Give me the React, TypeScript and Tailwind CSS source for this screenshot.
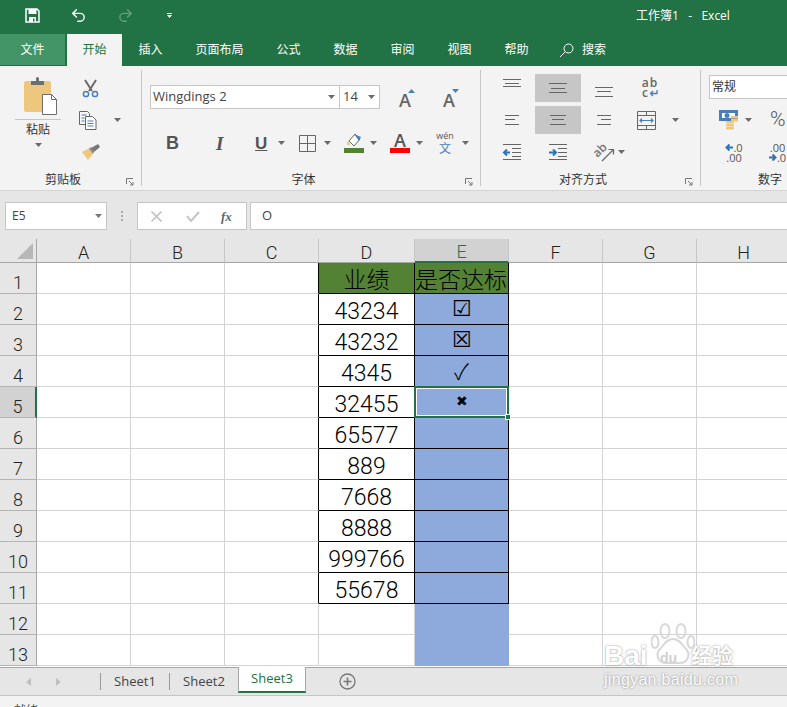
import { Redo2, Undo2 } from "lucide-react";
import type { ReactNode } from "react";

const ui = "font-['Open_Sans','Noto_Sans_CJK_SC',sans-serif]";
const cellFont = "font-['Roboto','Noto_Sans_CJK_SC',sans-serif] font-light";

const columns = ["A", "B", "C", "D", "E", "F", "G", "H"];
const scores = ["业绩", "43234", "43232", "4345", "32455", "65577", "889", "7668", "8888", "999766", "55678", "", ""];
const marks = ["是否达标", "☑", "☒", "✓", "✖", "", "", "", "", "", "", "", ""];
const tabs = ["插入", "页面布局", "公式", "数据", "审阅", "视图", "帮助"];

function Caret({ color = "#6a6a6a" }: { color?: string }) {
  return (
    <svg width="7" height="4" viewBox="0 0 7 4" className="shrink-0">
      <path d="M0 0h7L3.5 4z" fill={color} />
    </svg>
  );
}

function Launcher() {
  return (
    <svg width="8" height="8" viewBox="0 0 8 8" className="shrink-0 mt-[3px]">
      <path d="M.5 6V.5H7M3 3l4 4M7 4v3H4" fill="none" stroke="#777" />
    </svg>
  );
}

function Group({ width, label, children }: { width: string; label: string; children: ReactNode }) {
  return (
    <section className={`${width} shrink-0 my-1 flex flex-col border-r border-[#c6c6c6]`}>
      <div className="flex-1 min-h-0">{children}</div>
      <div className="h-[20px] -mb-[4px] flex items-center pr-[7px]">
        <span className="flex-1 text-center text-[12px] text-[#333]">{label}</span>
        <Launcher />
      </div>
    </section>
  );
}

// three grey bars, y given against the 28px tall button
function Bars({ bars, active }: { bars: [number, number, number][]; active?: boolean }) {
  return (
    <div className={`h-[28px] ${active ? "bg-[#c6c6c6]" : ""}`}>
      <svg width="46" height="28" viewBox="0 0 46 28">
        {bars.map(([x, y, w], i) => (
          <rect key={i} x={x} y={y} width={w} height="1" fill="#666" />
        ))}
      </svg>
    </div>
  );
}

function PasteIcon() {
  return (
    <svg width="36" height="39" viewBox="0 0 36 39">
      <rect x="1" y="4" width="27" height="31" rx="2" fill="#edc77e" />
      <path d="M8 8V4h5V1.500a1.500 1.500 0 0 1 3 0V4h5v4z" fill="#6e6e6e" />
      <path d="M19.500 17.500h9l5 5v15h-14z" fill="#fff" stroke="#6e6e6e" />
      <path d="M28.500 17.500v5h5" fill="none" stroke="#6e6e6e" />
    </svg>
  );
}

function ScissorsIcon() {
  return (
    <svg width="17" height="19" viewBox="0 0 17 19">
      <path d="M3 1l7 11M14 1L7 12" stroke="#6a6a6a" strokeWidth="2" fill="none" />
      <circle cx="4" cy="15" r="2.600" fill="none" stroke="#4a7ebb" strokeWidth="1.500" />
      <circle cx="13" cy="15" r="2.600" fill="none" stroke="#4a7ebb" strokeWidth="1.500" />
    </svg>
  );
}

function CopyIcon() {
  return (
    <svg width="18" height="19" viewBox="0 0 18 19">
      <path d="M.5.500h8l2 2v11H.5z" fill="#f7f7f7" stroke="#666" />
      <path d="M6.500 5.500h7l3.500 3.500v9.500H6.500z" fill="#fff" stroke="#666" />
      <path d="M2.500 4h5M2.500 7h3M2.500 10h3M8.500 10h6M8.500 12.500h6M8.500 15h6" stroke="#4a7ebb" />
    </svg>
  );
}

function BrushIcon() {
  return (
    <svg width="18" height="16" viewBox="0 0 18 16">
      <path d="M0 8l8-4 3 6-5 6z" fill="#edc77e" />
      <path d="M7 4.500l2-1.500 3 5-1 2z" fill="#8a8a8a" />
      <path d="M9 4l7-4 2 3-6 5z" fill="#777" />
    </svg>
  );
}

function GrowA({ up }: { up: boolean }) {
  return (
    <div className="w-[44px] h-[24px] flex justify-center items-center pt-[6px]">
      <div className="relative text-[18px] leading-[16px] text-[#666] font-semibold">
        A
        <svg width="7" height="4" viewBox="0 0 7 4" className="absolute -right-[4px] -top-[3px]">
          <path d={up ? "M0 4h7L3.500 0z" : "M0 0h7L3.500 4z"} fill="#4a7ebb" />
        </svg>
      </div>
    </div>
  );
}

function BorderIcon() {
  return (
    <svg width="17" height="17" viewBox="0 0 17 17">
      <path d="M.5.500h16v16H.5zM8.500.500v16M.5 8.500h16" fill="none" stroke="#666" />
    </svg>
  );
}

function FillIcon() {
  return (
    <div className="flex flex-col items-center">
      <svg width="20" height="15" viewBox="0 0 20 15">
        <path d="M5 8l6-7 5 5-6 7z" fill="#fff" stroke="#666" />
        <path d="M10 1l7 3-2 4z" fill="#4a7ebb" />
        <path d="M3 9l2-1 1 4H3z" fill="#edc77e" />
      </svg>
      <div className="w-[20px] h-[5px] bg-[#548235]" />
    </div>
  );
}

function WrapIcon() {
  return (
    <div className="w-[46px] h-[28px] flex flex-col items-center pt-[4px] text-[12px] leading-[10px] font-semibold text-[#666]">
      <span className="tracking-[1px] h-[10px]">ab</span>
      <span className="flex items-center h-[10px]">
        c
        <svg width="9" height="7" viewBox="0 0 9 7" className="ml-[1px]">
          <path d="M8 0v3.500H2M4 1L1.500 3.500 4 6" fill="none" stroke="#4a7ebb" strokeWidth="1.300" />
        </svg>
      </span>
    </div>
  );
}

function MergeIcon() {
  return (
    <svg width="19" height="19" viewBox="0 0 19 19">
      <path d="M.5.500h18v18H.5zM.5 4.500h18M.5 14.500h18M9.500.500v4M9.500 14.500v4" fill="none" stroke="#666" />
      <path d="M3 9.500h13M5 7.500l-2 2 2 2M14 7.500l2 2-2 2" fill="none" stroke="#4a7ebb" strokeWidth="1.200" />
    </svg>
  );
}

function IndentIcon({ flip }: { flip?: boolean }) {
  return (
    <svg width="46" height="28" viewBox="0 0 46 28">
      <g fill="#666">
        <rect x="14" y="6" width="18" height="1" />
        <rect x="23" y="10" width="9" height="1" />
        <rect x="23" y="14" width="9" height="1" />
        <rect x="23" y="18" width="9" height="1" />
        <rect x="14" y="21" width="18" height="1" />
      </g>
      <path
        d={flip ? "M14 14.500h6M18 11.500l3 3-3 3" : "M21 14.500h-6M18 11.500l-3 3 3 3"}
        fill="none"
        stroke="#2e75b6"
        strokeWidth="2"
      />
    </svg>
  );
}

function OrientIcon() {
  return (
    <div className="w-[46px] h-[28px] flex items-center pl-[12px] gap-[3px]">
      <svg width="22" height="20" viewBox="0 0 22 20" className="overflow-visible">
        <text x="0" y="13" fontSize="12" fontWeight="600" fill="#777" transform="rotate(-45 6 9)" fontFamily="Open Sans">ab</text>
        <path d="M9 19L20 8M15.500 7.500h5v5" fill="none" stroke="#666" strokeWidth="1.200" />
      </svg>
      <Caret />
    </div>
  );
}

function MoneyIcon() {
  return (
    <svg width="20" height="20" viewBox="0 0 20 20">
      <rect x="0" y="0" width="19" height="11" fill="#4a7ebb" />
      <rect x="3" y="3" width="13" height="5" fill="#fff" />
      <circle cx="8" cy="5.500" r="2.500" fill="#4a7ebb" />
      <rect x="12" y="6" width="7" height="2.500" fill="#edc77e" />
      <rect x="12" y="9" width="7" height="2.500" fill="#edc77e" />
      <rect x="7" y="11" width="8" height="2.500" rx="1" fill="#edc77e" />
      <rect x="7" y="14" width="8" height="2.500" rx="1" fill="#edc77e" />
      <rect x="7" y="17" width="8" height="2.500" rx="1" fill="#edc77e" />
    </svg>
  );
}

function DecArrow({ right }: { right?: boolean }) {
  return (
    <svg width="8" height="7" viewBox="0 0 8 7" className="shrink-0">
      <path d={right ? "M0 3.500h6M3.500 .5l3 3-3 3" : "M8 3.500H2M4.500 .5l-3 3 3 3"} fill="none" stroke="#2e75b6" strokeWidth="2" />
    </svg>
  );
}

function DecimalIcon({ more }: { more?: boolean }) {
  return (
    <div className="w-[32px] flex flex-col items-center gap-[1px] text-[11px] leading-[9px] text-[#555]">
      <span className="h-[9px] flex items-center">
        {more ? null : <DecArrow />}
        {more ? ".00" : ".0"}
      </span>
      <span className="h-[9px] flex items-center">
        {more ? <DecArrow right /> : null}
        {more ? ".0" : ".00"}
      </span>
    </div>
  );
}

function Ribbon() {
  return (
    <div className="h-[124px] bg-[#f3f3f3] flex overflow-hidden text-[#444]">
      <Group width="w-[142px]" label="剪贴板">
        <div className="flex h-full">
          <div className="w-[76px] pl-[15px] pt-[7px]">
            <div className="w-[46px] flex justify-center pl-[5px] pb-[3px] border-b border-[#c6c6c6]">
              <PasteIcon />
            </div>
            <div className="w-[46px] flex flex-col items-center">
              <span className="text-[12px] leading-[18px] mt-[1px] text-[#333]">粘贴</span>
              <div className="mt-[4px]"><Caret /></div>
            </div>
          </div>
          <div className="flex flex-col pt-[9px] w-[50px]">
            <div className="pl-[6px] h-[32px]"><ScissorsIcon /></div>
            <div className="pl-[3px] h-[33px] flex items-start gap-[17px]">
              <CopyIcon />
              <div className="pt-[7px]"><Caret /></div>
            </div>
            <div className="pl-[6px]"><BrushIcon /></div>
          </div>
        </div>
      </Group>

      <Group width="w-[339px]" label="字体">
        <div className="pl-[8px] pt-[15px]">
          <div className="flex items-center">
            <div className="w-[190px] h-[24px] bg-white border border-[#c6c6c6] flex items-center justify-between px-[2px] pr-[4px] text-[13px]">
              <span className="text-[#444]">Wingdings 2</span>
              <Caret />
            </div>
            <div className="w-[40px] h-[24px] bg-white border border-l-0 border-[#c6c6c6] flex items-center justify-between pl-[3px] pr-[4px] text-[13px]">
              <span>14</span>
              <Caret />
            </div>
            <div className="pl-[3px]"><GrowA up /></div>
            <GrowA up={false} />
          </div>
          <div className="flex items-center h-[28px] mt-[20px] pl-[13px]">
            <span className="w-[50px] text-[18px] leading-none font-bold text-[#555] font-['Liberation_Sans',sans-serif] pl-[3px]">B</span>
            <span className="w-[37px] text-[19px] leading-none font-bold italic text-[#555] font-['Liberation_Serif',serif] pl-[3px]">I</span>
            <span className="w-[23px] text-[17px] leading-none font-bold underline text-[#555] font-['Liberation_Sans',sans-serif] ml-[5px]">U</span>
            <Caret />
            <div className="ml-[14px]"><BorderIcon /></div>
            <div className="ml-[8px]"><Caret /></div>
            <div className="ml-[13px]"><FillIcon /></div>
            <div className="ml-[6px]"><Caret /></div>
            <div className="ml-[13px] flex flex-col items-center">
              <span className="text-[18px] leading-[15px] font-semibold text-[#555]">A</span>
              <div className="w-[20px] h-[5px] bg-[#ff0000]" />
            </div>
            <div className="ml-[6px]"><Caret /></div>
            <div className="ml-[13px] w-[18px] flex flex-col items-center text-[#555]">
              <span className="text-[9px] leading-[8px] h-[8px]">wén</span>
              <span className="text-[12px] leading-[13px] mt-[2px] text-[#4a7ebb]">文</span>
            </div>
            <div className="ml-[8px]"><Caret /></div>
          </div>
        </div>
      </Group>

      <Group width="w-[220px]" label="对齐方式">
        <div className="pl-[8px] pt-[4px] grid grid-cols-[46px_46px_46px_78px] gap-y-[4px]">
          <Bars bars={[[14, 5, 18], [16, 9, 14], [14, 12, 18]]} />
          <Bars active bars={[[14, 9, 18], [16, 14, 14], [14, 18, 18]]} />
          <Bars bars={[[14, 13, 18], [16, 17, 14], [14, 22, 18]]} />
          <WrapIcon />
          <Bars bars={[[16, 9, 14], [16, 13, 10], [16, 18, 14]]} />
          <Bars active bars={[[15, 9, 16], [17, 13, 12], [15, 18, 16]]} />
          <Bars bars={[[16, 9, 14], [20, 13, 10], [16, 18, 14]]} />
          <div className="h-[28px] flex items-center pl-[10px] gap-[16px]">
            <MergeIcon />
            <Caret />
          </div>
          <IndentIcon />
          <IndentIcon flip />
          <OrientIcon />
        </div>
      </Group>

      <section className="flex-1 my-1 flex flex-col min-w-0">
        <div className="flex-1 pl-[8px] pt-[5px]">
          <div className="h-[24px] bg-white border border-r-0 border-[#c6c6c6] flex items-center pl-[2px] text-[12px] text-[#333]">常规</div>
          <div className="flex items-center mt-[10px] pl-[10px]">
            <MoneyIcon />
            <div className="ml-[6px]"><Caret /></div>
            <span className="ml-[18px] text-[21px] leading-none font-['Roboto',sans-serif] font-light text-[#555]">%</span>
          </div>
          <div className="flex items-center mt-[13px] gap-[18px]">
            <div className="pl-[9px]"><DecimalIcon /></div>
            <DecimalIcon more />
          </div>
        </div>
        <div className="h-[20px] -mb-[4px] flex items-center pl-[57px] text-[12px] text-[#333]">数字</div>
      </section>
    </div>
  );
}

function FormulaBar() {
  return (
    <div className="h-[49px] bg-[#e6e6e6] border-t border-[#d4d4d4] flex items-start pt-[11px] pl-[5px] text-[12px] text-[#444]">
      <div className="w-[102px] h-[28px] bg-white border border-[#c6c6c6] flex items-center justify-between pl-[6px] pr-[4px]">
        <span>E5</span>
        <Caret color="#777" />
      </div>
      <div className="w-[30px] h-[28px] flex flex-col items-center justify-center gap-[2px]">
        <i className="w-[2px] h-[2px] bg-[#aaa]" />
        <i className="w-[2px] h-[2px] bg-[#aaa]" />
        <i className="w-[2px] h-[2px] bg-[#aaa]" />
      </div>
      <div className="w-[110px] h-[28px] bg-white border border-[#c6c6c6] flex items-center pl-[13px]">
        <svg width="11" height="11" viewBox="0 0 11 11"><path d="M.5.500l10 10M10.500.500l-10 10" stroke="#c4c4c4" strokeWidth="1.600" /></svg>
        <svg width="14" height="11" viewBox="0 0 14 11" className="ml-[24px]"><path d="M1 5l4 5 8-9" fill="none" stroke="#c4c4c4" strokeWidth="2" /></svg>
        <span className="ml-[21px] text-[13px] leading-none font-bold italic font-['Liberation_Serif',serif] text-[#666]">fx</span>
      </div>
      <div className="flex-1 h-[28px] ml-[3px] bg-white border border-r-0 border-[#c6c6c6] flex items-center pl-[11px] text-[13px]">O</div>
    </div>
  );
}

function Sheet() {
  return (
    <div className={`${cellFont} grid grid-cols-[37px_94px_94px_94px_96px_94px_94px_94px_94px] grid-rows-[24px_repeat(13,31px)] overflow-hidden`}>
      <div className="bg-[#e6e6e6] border-r border-b border-[#a6a6a6] flex items-end justify-end pr-[3px] pb-[3px]">
        <svg width="16" height="16" viewBox="0 0 16 16"><path d="M16 0v16H0z" fill="#b7b7b7" /></svg>
      </div>
      {columns.map((c) => (
        <div
          key={c}
          className={`flex items-end justify-center text-[18px] leading-[19px] border-r border-[#c6c6c6] ${
            c === "E" ? "bg-[#d2d2d2] border-b-2 border-b-[#217346] text-[#217346]" : "bg-[#e6e6e6] border-b border-b-[#a6a6a6] text-[#222]"
          }`}
        >
          {c}
        </div>
      ))}
      {scores.map((score, i) => {
        const row = i + 1;
        const inTable = row <= 11;
        const edge = row === 5;
        const line = "border-r border-b border-[#d4d4d4]";
        return [
          <div
            key={`h${row}`}
            className={`flex items-end justify-center text-[18px] leading-[21px] text-[#222] border-b border-b-[#b4b4b4] border-r ${
              edge ? "bg-[#d2d2d2] border-r-2 border-r-[#217346]" : "bg-[#e6e6e6] border-r-[#a6a6a6]"
            }`}
          >
            {row}
          </div>,
          <div key={`a${row}`} className={line} />,
          <div key={`b${row}`} className={line} />,
          <div key={`c${row}`} className={`border-b border-b-[#d4d4d4] border-r ${inTable ? "border-r-black" : "border-r-[#d4d4d4]"}`} />,
          <div
            key={`d${row}`}
            className={`flex items-end justify-center text-[23px] leading-[25px] text-black overflow-hidden ${
              inTable ? "border-r border-b border-black" : "border-r border-b border-[#d4d4d4]"
            } ${row === 1 ? "bg-[#548235]" : ""}`}
          >
            {score}
          </div>,
          <div
            key={`e${row}`}
            className={`relative flex justify-center whitespace-nowrap text-black ${
              row === 1
                ? "bg-[#548235] items-end text-[23px] leading-[25px]"
                : row === 4
                  ? "bg-[#8ea9db] items-start text-[22px] leading-[29px] font-['Noto_Sans_CJK_SC','DejaVu_Sans',sans-serif]"
                  : row === 5
                    ? "bg-[#8ea9db] items-start text-[14px] leading-[29px] font-['DejaVu_Sans',sans-serif]"
                    : "bg-[#8ea9db] items-start text-[22px] leading-[30px] font-['DejaVu_Sans',sans-serif]"
            } ${inTable ? "border-r border-b border-black" : ""}`}
          >
            {row === 1 ? <span className="w-[93px] overflow-hidden">{marks[i]}</span> : marks[i]}
            {row === 5 && (
              <div className="absolute z-10 -left-[1px] -top-[1px] -right-[1px] -bottom-[1px] border-2 border-[#217346] shadow-[inset_0_0_0_1px_white]">
                <span className="absolute -right-[4px] -bottom-[4px] w-[6px] h-[6px] bg-[#217346] border border-white" />
              </div>
            )}
          </div>,
          <div key={`f${row}`} className={line} />,
          <div key={`g${row}`} className={line} />,
          <div key={`i${row}`} className={line} />,
        ];
      })}
    </div>
  );
}

function SheetTabs() {
  return (
    <div className="h-[28px] mt-[1px] bg-[#e6e6e6] border-t border-[#a6a6a6] flex items-stretch text-[13px] text-[#444]">
      <div className="w-[100px] flex items-center pl-[26px] gap-[25px] shrink-0">
        <svg width="5" height="8" viewBox="0 0 5 8"><path d="M5 0v8L0 4z" fill="#c0c0c0" /></svg>
        <svg width="5" height="8" viewBox="0 0 5 8"><path d="M0 0v8l5-4z" fill="#c0c0c0" /></svg>
      </div>
      <div className="w-[69px] my-[5px] border-l border-[#999] flex items-center justify-center">Sheet1</div>
      <div className="w-[69px] my-[5px] border-l border-[#999] flex items-center justify-center">Sheet2</div>
      <div className="w-[68px] -mt-px mb-[2px] bg-white border-x border-[#a6a6a6] border-b-2 border-b-[#217346] text-[#217346] flex items-center justify-center">Sheet3</div>
      <div className="pl-[33px] flex items-center">
        <svg width="17" height="17" viewBox="0 0 17 17">
          <circle cx="8.500" cy="8.500" r="7.500" fill="none" stroke="#777" strokeWidth="1.300" />
          <path d="M8.500 4.500v8M4.500 8.500h8" stroke="#777" strokeWidth="1.600" />
        </svg>
      </div>
    </div>
  );
}

function Watermark() {
  return (
    <div className="font-['Liberation_Sans','Noto_Sans_CJK_SC',sans-serif] absolute left-[604px] top-[622px] w-[142px] text-white [text-shadow:0_0_2px_rgba(90,90,90,0.75)] pointer-events-none">
      <svg width="44" height="44" viewBox="0 0 44 44" className="absolute left-[47px] top-0" fill="none" stroke="#d8d8d8" strokeWidth="2">
        <ellipse cx="14" cy="9" rx="4.500" ry="7" />
        <ellipse cx="30" cy="9" rx="4.500" ry="7" />
        <ellipse cx="4" cy="20" rx="3.500" ry="6" />
        <ellipse cx="40" cy="20" rx="3.500" ry="6" />
        <path d="M22 17c7 0 9 6 13 10 5 5 2 14-6 14H15C7 41 4 32 9 27c4-4 6-10 13-10z" />
      </svg>
      <div className="flex items-end h-[46px] pt-[22px] text-[28px] leading-[24px] font-bold">
        <span className="w-[76px]">Bai</span>
        <span className="text-[14px] leading-[20px] w-[20px] -ml-[20px] text-[#d0d0d0] [text-shadow:none]">du</span>
        <span className="text-[21px] leading-[24px] ml-[11px] whitespace-nowrap">经验</span>
      </div>
      <div className="mt-[2px] text-[16px] leading-[20px] whitespace-nowrap tracking-[0.3px]">jingyan.baidu.com</div>
    </div>
  );
}

export default function App() {
  return (
    <div className={`${ui} relative w-[787px] h-[707px] overflow-hidden bg-white flex flex-col`}>
      <header className="h-[34px] pb-[3px] bg-[#217346] flex items-center text-white">
        <div className="pl-[25px] w-[56px]">
          <svg width="15" height="15" viewBox="0 0 15 15">
            <path d="M1 1h11l2 2v11H1z" fill="none" stroke="#fff" strokeWidth="1.500" />
            <rect x="3.500" y="1" width="8" height="5" fill="#fff" />
            <rect x="4" y="9" width="7" height="5" fill="#fff" />
            <rect x="8" y="10.500" width="1.500" height="3" fill="#217346" />
          </svg>
        </div>
        <div className="w-[47px] pl-[14px]"><Undo2 size={17} strokeWidth={2} /></div>
        <div className="w-[45px] pl-[14px] opacity-30"><Redo2 size={17} strokeWidth={2} /></div>
        <div className="pl-[19px] w-[45px] flex flex-col gap-[1px]">
          <i className="w-[5px] h-px bg-white" />
          <svg width="5" height="3" viewBox="0 0 5 3"><path d="M0 0h5L2.500 3z" fill="#fff" /></svg>
        </div>
        <div className="ml-[443px] text-[12px] whitespace-nowrap">工作簿1&nbsp;&nbsp; - &nbsp;&nbsp;Excel</div>
      </header>

      <nav className="h-[32px] bg-[#217346] flex items-stretch text-[12px] text-white">
        <div className="w-[65px] mb-[1px] bg-[#439467] flex items-center justify-center">文件</div>
        <div className="w-[55px] ml-[2px] bg-[#f3f3f3] text-[#217346] flex items-center justify-center">开始</div>
        {tabs.map((t) => (
          <div key={t} className="px-[16.5px] flex items-center">{t}</div>
        ))}
        <div className="flex items-center pl-[14px] gap-[8px]">
          <svg width="15" height="15" viewBox="0 0 15 15" fill="none" stroke="#fff">
            <circle cx="9.500" cy="5.500" r="4.500" />
            <path d="M6 9l-5 5" />
          </svg>
          搜索
        </div>
      </nav>

      <Ribbon />
      <FormulaBar />
      <Sheet />
      <SheetTabs />
      <div className="flex-1 min-h-0 bg-[#f3f3f3] border-t border-[#c6c6c6] pl-[14px] pt-[5px] text-[12px] leading-[20px] text-[#444] overflow-hidden">就绪</div>
      <Watermark />
    </div>
  );
}
